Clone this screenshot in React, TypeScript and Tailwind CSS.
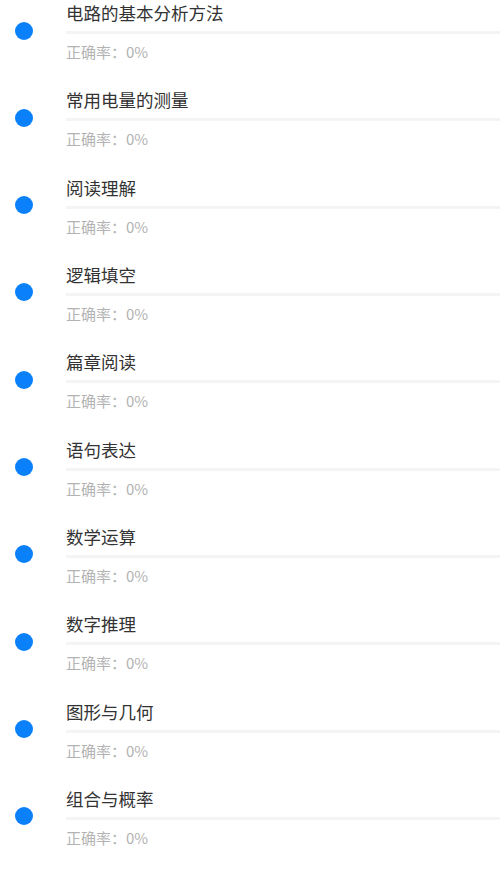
import React from 'react';

const topics = [
  '电路的基本分析方法',
  '常用电量的测量',
  '阅读理解',
  '逻辑填空',
  '篇章阅读',
  '语句表达',
  '数学运算',
  '数字推理',
  '图形与几何',
  '组合与概率',
];

export default function App() {
  return (
    <div
      className="w-[500px] h-[875px] bg-white overflow-hidden"
      style={{ fontFamily: '"Noto Sans CJK SC", "Noto Sans", sans-serif' }}
    >
      {topics.map((name) => (
        <div key={name} className="flex h-[87.33px]">
          <div className="w-[66px] shrink-0 pl-[15px] pt-[21.5px]">
            <div className="w-[18px] h-[18px] rounded-full bg-[#0a80fa]" />
          </div>
          <div className="flex-1 flex flex-col">
            <div className="text-[17.5px] leading-[26px] text-[#333333]">{name}</div>
            <div className="mt-[5px] h-[3px] bg-[#f4f4f4]" />
            <div className="mt-[8px] text-[15px] leading-[20px] text-[#b3b3b3]">正确率：0%</div>
          </div>
        </div>
      ))}
    </div>
  );
}
